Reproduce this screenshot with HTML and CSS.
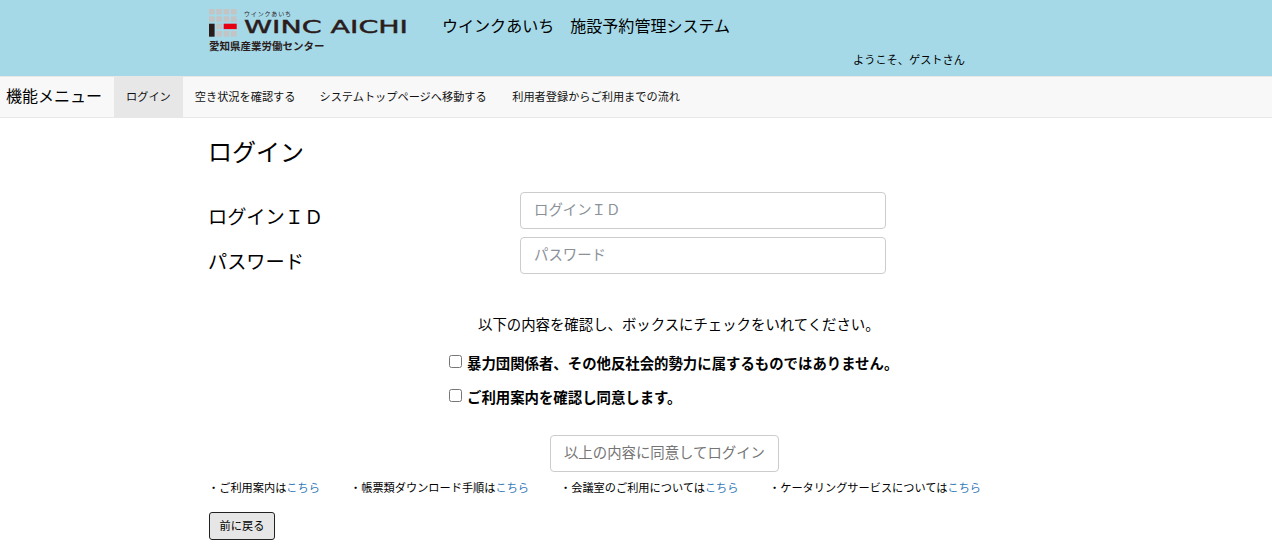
FILE: index.html
```html
<!DOCTYPE html>
<html lang="ja">
<head>
<meta charset="utf-8">
<title>ログイン</title>
<link rel="stylesheet" href="styles.css">
</head>
<body>
<header class="site-header">
  <div class="logo">
    <svg class="logo-art" width="200" height="30" viewBox="0 0 200 30">
      <g fill="#c4c4c4">
        <rect x="0" y="0" width="5.6" height="5.4"/><rect x="7.3" y="0" width="5.6" height="5.4"/><rect x="14.7" y="0" width="5.6" height="5.4"/><rect x="22" y="0" width="5.6" height="5.4"/>
        <rect x="0" y="7.3" width="5.6" height="5.4"/><rect x="7.3" y="7.3" width="5.6" height="5.4"/><rect x="14.7" y="7.3" width="5.6" height="5.4"/><rect x="22" y="7.3" width="5.6" height="5.4"/>
        <rect x="7.3" y="14.7" width="5.6" height="5.4"/>
        <rect x="7.3" y="22" width="5.6" height="5.6"/><rect x="14.7" y="22" width="5.6" height="5.6"/><rect x="22" y="22" width="5.6" height="5.6"/>
      </g>
      <rect x="0" y="14.7" width="5.6" height="13" fill="#2b1c1c"/>
      <rect x="14.7" y="14.7" width="13" height="5.4" fill="#e60012"/>
      <text class="logo-kana" x="35" y="7" textLength="47" lengthAdjust="spacing">ウインクあいち</text>
      <text class="logo-name" x="35" y="24" textLength="164" lengthAdjust="spacingAndGlyphs">WINC AICHI</text>
    </svg>
    <div class="logo-sub">愛知県産業労働センター</div>
  </div>
  <div class="header-main">
    <div class="system-title">ウインクあいち　施設予約管理システム</div>
    <div class="welcome">ようこそ、ゲストさん</div>
  </div>
</header>
<nav class="menu">
  <span class="menu-brand">機能メニュー</span>
  <a class="menu-item active">ログイン</a>
  <a class="menu-item">空き状況を確認する</a>
  <a class="menu-item menu-item-wide">システムトップページへ移動する</a>
  <a class="menu-item">利用者登録からご利用までの流れ</a>
</nav>
<main class="content">
  <h1 class="page-title">ログイン</h1>
  <div class="form-row">
    <label class="form-label">ログインＩＤ</label>
    <input class="form-input" type="text" placeholder="ログインＩＤ">
  </div>
  <div class="form-row">
    <label class="form-label">パスワード</label>
    <input class="form-input" type="password" placeholder="パスワード">
  </div>
  <p class="notice">以下の内容を確認し、ボックスにチェックをいれてください。</p>
  <label class="check check-first"><input type="checkbox"><span>暴力団関係者、その他反社会的勢力に属するものではありません。</span></label>
  <label class="check check-second"><input type="checkbox"><span>ご利用案内を確認し同意します。</span></label>
  <div class="submit-row"><button class="submit" type="button">以上の内容に同意してログイン</button></div>
  <div class="links">
    <span class="link-item link-a">・ご利用案内は<a>こちら</a></span>
    <span class="link-item link-b">・帳票類ダウンロード手順は<a>こちら</a></span>
    <span class="link-item link-c">・会議室のご利用については<a>こちら</a></span>
    <span class="link-item">・ケータリングサービスについては<a>こちら</a></span>
  </div>
  <button class="back" type="button">前に戻る</button>
</main>
</body>
</html>
```
FILE: styles.css
```css
* { box-sizing: border-box; }
html, body { margin: 0; height: 546px; overflow: hidden; }
body { font-family: "Noto Sans CJK JP", "Noto Sans", sans-serif; color: #000; background: #fff; }

.site-header { height: 76px; background: #a5d9e8; padding: 9px 0 0 209px; display: flex; }
.logo { width: 233px; }
.logo-art { display: block; }
.logo-kana { font-size: 6px; fill: #2b1c1c; }
.logo-name { font-family: "DejaVu Sans", sans-serif; font-weight: 400; font-size: 18px; fill: #2b1c1c; stroke: #2b1c1c; stroke-width: .45px; }
.logo-sub { font-size: 10.5px; line-height: 14px; margin-top: 0; font-weight: 700; color: #2b1c1c; white-space: nowrap; }
.header-main { display: flex; flex-direction: column; }
.system-title { font-size: 16.05px; line-height: 24px; padding-top: 4px; height: 41px; }
.welcome { font-size: 11.2px; line-height: 16px; padding: 1px 0 0 411px; white-space: nowrap; }

.menu { height: 42px; background: #f8f8f8; border-top: 1px solid #e7e7e7; border-bottom: 1px solid #e7e7e7; display: flex; align-items: stretch; font-size: 11.2px; }
.menu-brand { font-size: 16px; line-height: 37px; padding: 0 12px 0 6px; width: 114px; white-space: nowrap; }
.menu-item { padding: 0 12px; line-height: 38px; white-space: nowrap; color: #111; }
.menu-item.active { background: #e7e7e7; }
.menu-item-wide { padding-right: 13.5px; }

.content { padding: 0 0 0 209px; }
.page-title { font-size: 24px; font-weight: 400; line-height: 34px; margin: 16px 0 24px -1px; }
.form-row { display: flex; height: 37px; margin-bottom: 8px; }
.form-label { width: 311px; font-size: 19.2px; line-height: 48px; white-space: nowrap; margin-left: -1px; margin-right: 1px; }
.form-input { width: 366px; height: 37px; padding: 0 13px 4px; border: 1px solid #ccc; border-radius: 4px; font: inherit; font-size: 14.4px; background: #fff; }
.form-input::placeholder { color: #8a9198; opacity: 1; }

.notice { margin: 40px 0 0 269px; font-size: 14.4px; line-height: 20px; white-space: nowrap; }
.check { display: flex; align-items: flex-start; margin-left: 240px; font-size: 14.4px; font-weight: 700; line-height: 20px; white-space: nowrap; }
.check input { width: 13px; height: 13px; margin: 2px 5px 0 0; flex: none; }
.check-first { margin-top: 19px; }
.check-second { margin-top: 14px; }

.submit-row { margin: 28px 0 0 341px; }
.submit { width: 229px; height: 37px; padding: 0 0 4px; background: #fff; border: 1px solid #ccc; border-radius: 4px; font: inherit; font-size: 14.4px; color: #757575; white-space: nowrap; }

.links { display: flex; margin: 6px 0 0 -1px; font-size: 11.2px; line-height: 18px; white-space: nowrap; }
.link-item a { color: #337ab7; }
.link-a { width: 142px; }
.link-b { width: 210px; }
.link-c { width: 209px; }

.back { display: block; margin-top: 16px; width: 66px; height: 28px; padding: 0 0 2px; background: #e6e6e6; border: 1px solid #222; border-radius: 3px; font: inherit; font-size: 11.2px; color: #000; }
```
